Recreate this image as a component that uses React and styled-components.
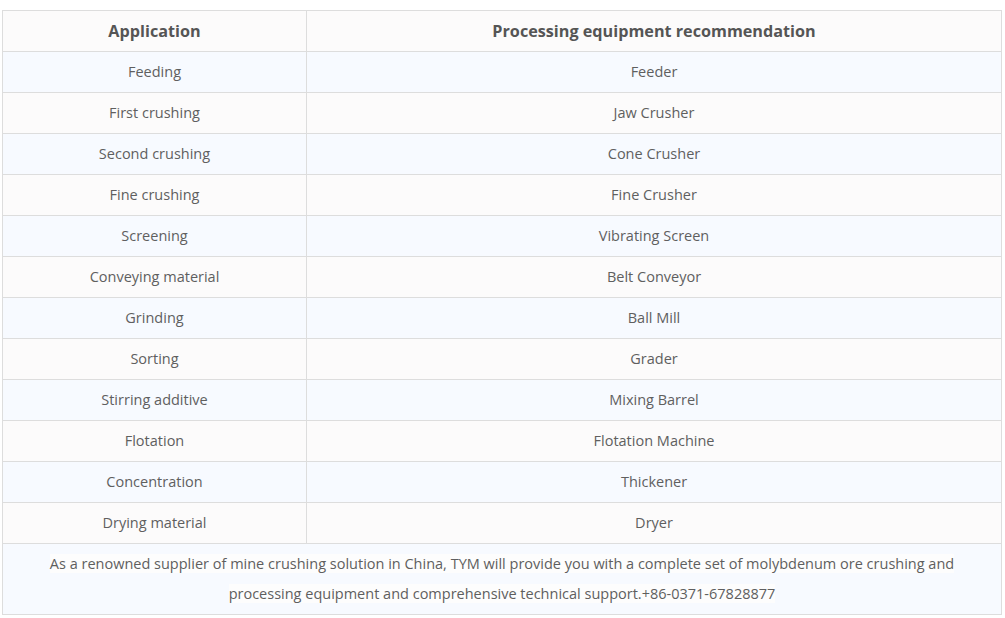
import React from "react";
import styled, { createGlobalStyle } from "styled-components";

const Global = createGlobalStyle`
  html, body { margin: 0; padding: 0; background: #fff; }
  body { font-family: "Open Sans", "Noto Sans", "Liberation Sans", sans-serif; }
`;

const Wrap = styled.div`
  padding: 10px 0 0 2px;
`;

const Table = styled.table`
  width: 1000px;
  border-collapse: collapse;
  table-layout: fixed;
  color: #5f5f5f;
  font-size: 14.5px;
`;

const Row = styled.tr`
  background: ${(p) => (p.$alt ? "#f7faff" : "#fcfbfb")};
`;

const Head = styled.th`
  height: 40px;
  padding: 0;
  border: 1px solid #dddddd;
  font-weight: 700;
  font-size: 16.2px;
  color: #555;
  text-align: center;
  background: #fcfbfb;
`;

const Cell = styled.td`
  height: 38px;
  padding: 0 0 2px;
  border: 1px solid #dddddd;
  text-align: center;
`;

const Footer = styled.td`
  border: 1px solid #dddddd;
  text-align: center;
  padding: 5px 10px 5px;
  line-height: 30px;
  background: #f7faff;
`;

const Hl = styled.span`
  background: #fdfdfd;
`;

const rows = [
  ["Feeding", "Feeder"],
  ["First crushing", "Jaw Crusher"],
  ["Second crushing", "Cone Crusher"],
  ["Fine crushing", "Fine Crusher"],
  ["Screening", "Vibrating Screen"],
  ["Conveying material", "Belt Conveyor"],
  ["Grinding", "Ball Mill"],
  ["Sorting", "Grader"],
  ["Stirring additive", "Mixing Barrel"],
  ["Flotation", "Flotation Machine"],
  ["Concentration", "Thickener"],
  ["Drying material", "Dryer"],
];

export default function App() {
  return (
    <Wrap>
      <Global />
      <Table>
        <colgroup>
          <col style={{ width: 304 }} />
          <col />
        </colgroup>
        <thead>
          <tr>
            <Head>Application</Head>
            <Head>Processing equipment recommendation</Head>
          </tr>
        </thead>
        <tbody>
          {rows.map(([a, b], i) => (
            <Row key={a} $alt={i % 2 === 0}>
              <Cell>{a}</Cell>
              <Cell>{b}</Cell>
            </Row>
          ))}
          <tr>
            <Footer colSpan={2}>
              <Hl>
                As a renowned supplier of mine crushing solution in China, TYM will provide you with a complete set of molybdenum ore crushing and processing equipment and comprehensive technical support.+86-0371-67828877
              </Hl>
            </Footer>
          </tr>
        </tbody>
      </Table>
    </Wrap>
  );
}
